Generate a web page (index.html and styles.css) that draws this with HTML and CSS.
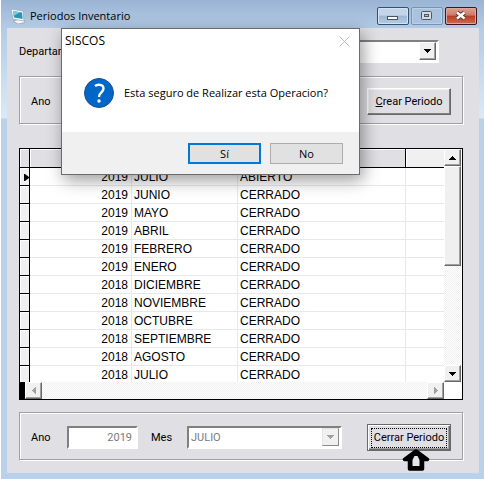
FILE: index.html
```html
<!DOCTYPE html>
<html lang="es">
<head>
<meta charset="utf-8">
<title>Periodos Inventario</title>
<link rel="stylesheet" href="styles.css">
</head>
<body>
<main class="window">
  <header class="titlebar">
    <svg class="app-icon" viewBox="0 0 16 16" aria-hidden="true">
      <path d="M3 13l5 3 6-1 1-2-5-2z" fill="#f4f4f4" stroke="#9a9a9a" stroke-width=".7"/>
      <path d="M1 1l12 2 1 10-11-2z" fill="#fafbfb" stroke="#9aa6b0" stroke-width=".7"/>
      <path d="M3 3l9 1.500.7 6.500-8.700-1.500z" fill="#2a94b4"/>
      <path d="M3 3l7 1.200-6.500 3.800z" fill="#7fcbe0"/>
    </svg>
    <h1 class="title">Periodos Inventario</h1>
    <div class="window-buttons">
      <button class="win-btn" type="button" aria-label="Minimizar"><svg viewBox="0 0 32 18"><rect x="10.500" y="9.500" width="10" height="3" fill="#fff" stroke="#4a5464"/></svg></button>
      <button class="win-btn win-btn-dim" type="button" aria-label="Maximizar"><svg viewBox="0 0 32 18"><rect x="10.500" y="4.500" width="10" height="8" rx="1" fill="#d5dbe2" stroke="#4d5666"/><rect x="13.500" y="7.500" width="4" height="2" fill="#a9c0da" stroke="#4d5666"/></svg></button>
      <button class="win-btn win-btn-close" type="button" aria-label="Cerrar"><svg viewBox="0 0 32 18"><path d="M12 5.500l7.500 6M19.500 5.500l-7.500 6" stroke="#5a3535" stroke-width="4.500"/><path d="M12 5.500l7.500 6M19.500 5.500l-7.500 6" stroke="#fff" stroke-width="2.500"/></svg></button>
    </div>
  </header>

  <form class="content">
    <div class="department">
      <label for="departamento">Departamento</label>
      <div class="combo">
        <select id="departamento"><option></option></select>
        <span class="combo-arrow"><svg viewBox="0 0 7 4"><path d="M0 0h7v1h-1v1h-1v1h-1v1h-1v-1h-1v-1h-1v-1h-1z"/></svg></span>
      </div>
    </div>

    <div class="group">
      <span class="caption">Ano</span>
      <button class="button" type="button"><span><u>C</u>rear Periodo</span></button>
    </div>

    <div class="grid">
      <div class="rows">
        <table>
          <colgroup><col class="col-mark"><col class="col-year"><col class="col-month"><col class="col-state"><col></colgroup>
          <thead><tr><td></td><th></th><th></th><th></th><td></td></tr></thead>
          <tbody>
            <tr><td><svg class="marker" viewBox="0 0 5 7"><path d="M0 0h1l4 3v1l-4 3h-1z"/></svg></td><td>2019</td><td>JULIO</td><td>ABIERTO</td><td></td></tr>
            <tr><td></td><td>2019</td><td>JUNIO</td><td>CERRADO</td><td></td></tr>
            <tr><td></td><td>2019</td><td>MAYO</td><td>CERRADO</td><td></td></tr>
            <tr><td></td><td>2019</td><td>ABRIL</td><td>CERRADO</td><td></td></tr>
            <tr><td></td><td>2019</td><td>FEBRERO</td><td>CERRADO</td><td></td></tr>
            <tr><td></td><td>2019</td><td>ENERO</td><td>CERRADO</td><td></td></tr>
            <tr><td></td><td>2018</td><td>DICIEMBRE</td><td>CERRADO</td><td></td></tr>
            <tr><td></td><td>2018</td><td>NOVIEMBRE</td><td>CERRADO</td><td></td></tr>
            <tr><td></td><td>2018</td><td>OCTUBRE</td><td>CERRADO</td><td></td></tr>
            <tr><td></td><td>2018</td><td>SEPTIEMBRE</td><td>CERRADO</td><td></td></tr>
            <tr><td></td><td>2018</td><td>AGOSTO</td><td>CERRADO</td><td></td></tr>
            <tr><td></td><td>2018</td><td>JULIO</td><td>CERRADO</td><td></td></tr>
          </tbody>
        </table>
      </div>
      <div class="vscroll">
        <button class="scroll-btn" type="button" aria-label="Subir"><svg class="arrow" viewBox="0 0 7 4"><path d="M3 0h1v1h1v1h1v1h1v1h-7v-1h1v-1h1v-1h1z"/></svg></button>
        <div class="thumb"></div>
        <div class="track"></div>
        <button class="scroll-btn" type="button" aria-label="Bajar"><svg class="arrow" viewBox="0 0 7 4"><path d="M0 0h7v1h-1v1h-1v1h-1v1h-1v-1h-1v-1h-1v-1h-1z"/></svg></button>
      </div>
      <div class="hscroll">
        <button class="scroll-btn" type="button" disabled aria-label="Izquierda"><svg class="arrow-side" viewBox="0 0 4 7"><path d="M4 0v7h-1v-1h-1v-1h-1v-1h-1v-1h1v-1h1v-1h1v-1z"/></svg></button>
        <div class="track"></div>
        <button class="scroll-btn" type="button" disabled aria-label="Derecha"><svg class="arrow-side" viewBox="0 0 4 7"><path d="M0 0h1v1h1v1h1v1h1v1h-1v1h-1v1h-1v1h-1z"/></svg></button>
      </div>
    </div>

    <div class="group group-close">
      <label class="caption" for="ano">Ano</label>
      <input class="year" id="ano" value="2019" disabled>
      <label class="caption" for="mes">Mes</label>
      <div class="combo combo-month">
        <select id="mes" disabled><option>JULIO</option></select>
        <span class="combo-arrow"><svg viewBox="0 0 7 4"><path d="M0 0h7v1h-1v1h-1v1h-1v1h-1v-1h-1v-1h-1v-1h-1z"/></svg></span>
      </div>
      <button class="button button-default" type="button"><span>Cerrar Periodo</span></button>
      <svg class="pointer" viewBox="0 0 28 22" aria-hidden="true"><path d="M14 2l11.500 8.500h-5v9.500h-13v-9.500h-5z" stroke="#000" stroke-width="3.500" stroke-linejoin="round"/><path d="M12.500 7h3l2 4v6h-7v-6z" fill="#e8e7ec"/></svg>
    </div>
  </form>

  <section class="dialog" role="dialog" aria-labelledby="dialog-title">
    <div class="dialog-head">
      <h2 id="dialog-title">SISCOS</h2>
      <button class="dialog-close" type="button" aria-label="Cerrar"><svg viewBox="0 0 11 11"><path d="M.5.5l10 10M10.500.5l-10 10" stroke="#bcbcbc"/></svg></button>
    </div>
    <div class="dialog-body">
      <svg class="question" viewBox="0 0 30 30" aria-hidden="true"><circle cx="15" cy="15" r="14.500" fill="#0067c8" stroke="#1c4f8c"/><path d="M11 8c2.500-2 8.500-2 8.500 2.500 0 4-4.500 4-4.500 8.500" fill="none" stroke="#fff" stroke-width="2.400"/><circle cx="15" cy="23" r="1.700" fill="#fff"/></svg>
      <p>Esta seguro de Realizar esta Operacion?</p>
    </div>
    <div class="dialog-foot">
      <button class="choice choice-default" type="button">Sí</button>
      <button class="choice" type="button">No</button>
    </div>
  </section>
</main>
</body>
</html>
```
FILE: styles.css
```css
* { box-sizing: border-box; }
body { margin: 0; font: 11px/16px Roboto, "Liberation Sans", sans-serif; color: #000; background: #fff; }
h1, h2, p { margin: 0; font-weight: normal; }
button, input, select { font: inherit; color: inherit; margin: 0; border-radius: 0; }
svg { display: block; fill: #000; }

.window {
  position: relative;
  margin-left: 1px;
  padding: 0 5px 6px 6px;
  background: linear-gradient(#9ab4d3 0, #b3cbe6 28px, #dbe9f7 118px, #b9d1ea 119px);
}
.titlebar { display: flex; align-items: center; height: 28px; padding: 4px 2px 0 3px; }
.app-icon { width: 16px; height: 16px; margin-right: 4px; }
.title { flex: 1; font: 11px/16px "Open Sans", "Noto Sans", sans-serif; }
.window-buttons { display: flex; gap: 2px; }
.win-btn {
  width: 32px; height: 18px; padding: 0;
  border: 1px solid #33506f; border-radius: 2px;
  background: linear-gradient(#c3d5e9 45%, #9db7d4 50%, #b4cce5);
  box-shadow: inset 0 0 0 1px #d5e2f0;
}
.win-btn svg { width: 32px; height: 18px; margin: -1px; }
.win-btn-dim { border-color: #7693b3; background: #a9c2de; box-shadow: inset 0 0 0 1px #bdd0e6; }
.win-btn-close { border-color: #43121a; background: linear-gradient(#dda093, #cf7a68 45%, #b83c24 50%, #cc6b50); box-shadow: inset 0 0 0 1px #e0a79b; }

.content { background: #e0dfe4; padding: 12px 16px 13px 12px; }
.department { display: flex; align-items: center; gap: 8px; margin: 0 24px 13px 0; }

.combo { flex: 1; display: flex; height: 23px; padding: 0 1px 1px 0; background: #fff; border: 2px solid; border-color: #808080 #fff #fff #808080; }
.combo select { flex: 1; min-width: 0; appearance: none; border: 0; padding: 2px 2px 0; background: #fff; outline: 0; opacity: 1; }
.combo select:disabled { color: #7a7a7a; }
.combo-arrow { display: flex; align-items: center; justify-content: center; width: 17px; background: #f0f0f0; border: 1px solid; border-color: #fff #696969 #696969 #fff; box-shadow: inset -1px -1px #a0a0a0; }
.combo-arrow svg { width: 7px; height: 4px; }
.combo-month { flex: 0 1 155px; }
.combo-month svg { fill: #a0a0a0; }
.combo-month .combo-arrow { border-color: #e3e3e3 #8a8a8a #8a8a8a #e3e3e3; box-shadow: none; }

.group {
  display: flex; align-items: center;
  padding: 11px 11px 8px;
  border: 1px solid #a0a0a0;
  box-shadow: 1px 1px #fff, inset 1px 1px #fff;
}
.group-close { position: relative; }
.caption { width: 36px; }
.year { width: 71px; height: 23px; margin-right: 13px; padding: 0 4px; text-align: right; background: #fff; color: #7a7a7a; border: 2px solid; border-color: #808080 #fff #fff #808080; }

.button {
  width: 84px; height: 27px; margin-left: auto; padding: 0;
  background: #e0dfe4; white-space: nowrap;
  border: 1px solid; border-color: #fff #696969 #696969 #fff;
  box-shadow: inset -1px -1px #808080, inset 1px 1px #f0f0f0;
}
.button-default { border-color: #696969; box-shadow: inset 1px 1px #fff, inset -1px -1px #696969, inset -2px -2px #a0a0a0; padding: 2px 3px; }
.button-default span { display: block; border: 1px dotted #000; line-height: 18px; }
.pointer { position: absolute; right: 32px; top: 36px; width: 28px; height: 22px; }

.grid {
  display: grid; grid-template-columns: 1fr 17px; grid-template-rows: 233px 17px;
  margin: 24px 0 12px;
  padding-right: 1px;
  background: #fff; border: 1px solid #000;
}
.rows { overflow: hidden; }
table { width: 100%; table-layout: fixed; border-collapse: separate; border-spacing: 0; font: 12px/15px "Liberation Sans", Arial, sans-serif; }
.col-mark { width: 10px; }
.col-year { width: 102px; }
.col-month { width: 106px; }
.col-state { width: 168px; }
th, td { height: 18px; padding: 2px 2px 0; white-space: nowrap; border-right: 1px solid #e8e8e8; border-bottom: 1px solid #e8e8e8; }
thead td, thead th { height: 19px; background: #e0dfe4; border-color: #000; box-shadow: inset 1px 1px #fff; }
thead td:last-child { background: #f0f0f0; }
tr > :last-child { border-right: 0; }
tbody td:first-child { padding: 2px 0 0 4px; background: #f0f0f0; border-color: #000; box-shadow: inset 1px 1px #fff; }
tbody td:nth-child(2) { padding-right: 3px; text-align: right; }
.marker { width: 5px; height: 7px; }

.vscroll { display: flex; flex-direction: column; }
.hscroll { display: flex; border-left: 5px solid #000; }
.scroll-btn, .thumb { background: #f0f0f0; border: 1px solid; border-color: #fff #696969 #696969 #fff; box-shadow: inset -1px -1px #a0a0a0; }
.scroll-btn { display: flex; align-items: center; justify-content: center; flex: none; width: 17px; height: 17px; padding: 0; }
.scroll-btn:disabled svg { fill: #a0a0a0; }
.arrow { width: 7px; height: 4px; }
.arrow-side { width: 4px; height: 7px; }
.thumb { height: 100px; }
.track { flex: 1; background: repeating-conic-gradient(#fff 0 25%, #f0f0f0 0 50%) 0 0 / 2px 2px; }

.dialog {
  position: absolute; left: 60px; top: 28px; width: 299px;
  background: #fff; border: 1px solid #6b6b6b;
  font: 11px/16px "Open Sans", "Noto Sans", sans-serif;
  box-shadow: 3px 5px 16px rgba(0, 0, 0, .4);
}
.dialog-head { display: flex; justify-content: space-between; align-items: center; height: 24px; padding: 0 9px 0 3px; }
.dialog-head h2 { font-size: 12px; }
.dialog-close { padding: 0; border: 0; background: none; }
.dialog-close svg { width: 11px; height: 11px; }
.dialog-body { display: flex; align-items: center; gap: 10px; height: 79px; padding: 1px 0 0 22px; white-space: nowrap; }
.question { width: 30px; height: 30px; }
.dialog-foot { display: flex; justify-content: flex-end; gap: 9px; padding: 11px 16px 10px; background: #f0f0f0; }
.choice { width: 73px; height: 21px; padding: 0; background: #e1e1e1; border: 1px solid #adadad; line-height: 16px; }
.choice-default { border: 2px solid #0078d7; }
```
